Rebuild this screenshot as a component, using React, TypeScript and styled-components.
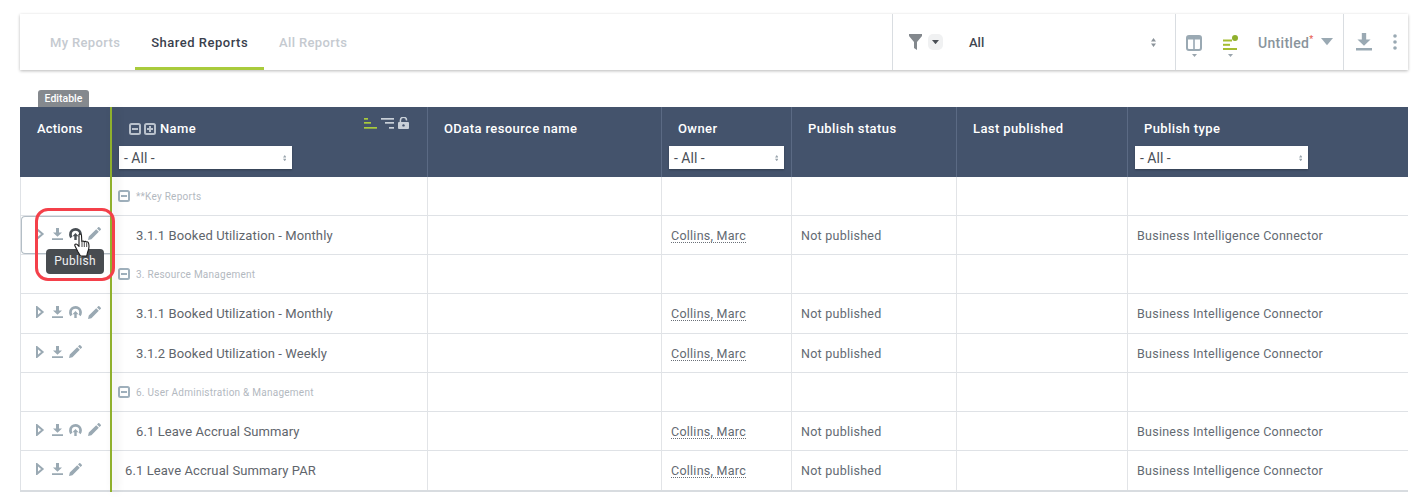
import React from "react";
import styled, { createGlobalStyle } from "styled-components";

const GlobalStyle = createGlobalStyle`
	html, body {
		margin: 0;
		padding: 0;
		background: #fff;
		font-family: Roboto, "Liberation Sans", sans-serif;
	}
`;

const Page = styled.div`
	width: 1428px;
	height: 502px;
	overflow: hidden;
	box-sizing: border-box;
	padding: 14px 20px 0;
`;

const Toolbar = styled.div`
	display: flex;
	height: 56px;
	background: #fff;
	box-shadow: 0 1px 3px rgba(0, 0, 0, 0.28);
	margin-bottom: 20px;
`;

const Tabs = styled.div`
	display: flex;
	flex: 1;
	padding-left: 15px;
`;

const Tab = styled.div<{ $active?: boolean }>`
	display: flex;
	align-items: center;
	box-sizing: border-box;
	height: 56px;
	padding: 3px ${(p) => (p.$active ? 16 : 15)}px 0;
	font-size: 13px;
	font-weight: 500;
	letter-spacing: ${(p) => (p.$active ? 0.5 : 0.35)}px;
	color: ${(p) => (p.$active ? "#3a3f4d" : "#c5cad0")};
	border-bottom: 3px solid ${(p) => (p.$active ? "#a9cb3c" : "transparent")};
`;

const FilterSection = styled.div`
	display: flex;
	align-items: center;
	box-sizing: border-box;
	width: 283px;
	padding: 0 19px 0 16px;
	border-left: 1px solid #d9dde1;
`;

const Chip = styled.div`
	display: flex;
	align-items: center;
	justify-content: center;
	width: 15px;
	height: 16px;
	margin-left: 6px;
	border-radius: 5px;
	background: #f0f1f2;
`;

const FilterValue = styled.div`
	flex: 1;
	margin-left: 26px;
	font-size: 13px;
	font-weight: 500;
	color: #3f4650;
`;

const ViewSection = styled.div`
	display: flex;
	align-items: center;
	box-sizing: border-box;
	width: 168px;
	padding-left: 10px;
	border-left: 1px solid #d9dde1;
`;

const ViewIcon = styled.div<{ $gap: number }>`
	display: flex;
	flex-direction: column;
	align-items: center;
	gap: 3px;
	margin-right: ${(p) => p.$gap}px;
	padding-top: 7px;
`;

const ViewName = styled.div`
	padding-top: 2px;
	font-size: 14px;
	font-weight: 500;
	letter-spacing: 0.3px;
	color: #8a949c;
	margin-right: 7px;
`;

const Star = styled.sup`
	font-size: 9px;
	line-height: 0;
	color: #e8604f;
`;

const ExportSection = styled.div`
	display: flex;
	align-items: center;
	box-sizing: border-box;
	width: 65px;
	padding-left: 12px;
	gap: 21px;
	border-left: 1px solid #d9dde1;
`;

const EditableTag = styled.div`
	width: 51px;
	height: 17px;
	margin-left: 18px;
	border-radius: 3px 3px 0 0;
	background: #85898e;
	color: #fff;
	font-size: 10.5px;
	font-weight: 500;
	line-height: 18px;
	text-align: center;
`;

const TableArea = styled.div`
	position: relative;
	width: 1388px;
`;

const Table = styled.table`
	width: 1388px;
	table-layout: fixed;
	border-collapse: separate;
	border-spacing: 0;
	border-bottom: 2px solid #d8dce0;
`;

const HeadCell = styled.th`
	box-sizing: border-box;
	height: 70px;
	padding: 14px 0 0 16px;
	vertical-align: top;
	text-align: left;
	background: #44536c;
	border-right: 1px solid #5b6a84;
	color: #fff;
	font-size: 13px;
	font-weight: 500;
	letter-spacing: 0.4px;
	line-height: 16px;

	&:first-child {
		padding-left: 17px;
		letter-spacing: 0.2px;
	}
	&:last-child {
		border-right: 0;
	}
`;

const NameHead = styled(HeadCell)`
	position: relative;
	padding-left: 18px;
`;

const NameTitle = styled.div`
	display: flex;
	align-items: center;
	gap: 3px;
`;

const NameLabel = styled.span`
	margin-left: 1px;
`;

const SortTools = styled.div`
	position: absolute;
	top: 10px;
	right: 18px;
	display: flex;
	gap: 4px;
	align-items: center;
`;

const Select = styled.div<{ $width: number; $left: number }>`
	display: flex;
	align-items: center;
	justify-content: space-between;
	box-sizing: border-box;
	width: ${(p) => p.$width}px;
	height: 23px;
	margin: 9px 0 0 ${(p) => p.$left}px;
	padding: 1px 6px 0 5px;
	background: #fff;
	box-shadow: 0 1px 2px rgba(0, 0, 0, 0.25);
	color: #4a4f58;
	font-size: 14px;
	font-weight: 400;
	letter-spacing: 0;
`;

const Cell = styled.td`
	box-sizing: border-box;
	height: 39px;
	padding: 0 0 0 9px;
	border-right: 1px solid #e2e4e7;
	border-bottom: 1px solid #dfe2e6;
	color: #636a72;
	font-size: 12.5px;
	letter-spacing: 0.25px;
	white-space: nowrap;

	&:last-child {
		border-right: 0;
	}
	tr:nth-child(4) > & {
		height: 40px;
	}
	tr:last-child > & {
		border-bottom: 0;
	}
`;

const ActionCell = styled(Cell)`
	padding: 0;
	border-left: 1px solid #dfe2e6;
`;

const ActionBox = styled.div<{ $hover?: boolean }>`
	display: flex;
	align-items: center;
	gap: 6px;
	box-sizing: border-box;
	height: 38px;
	padding: 0 0 3px 14px;
	border: 1px solid ${(p) => (p.$hover ? "#b4bec6" : "transparent")};
	border-right: 0;
	border-radius: 4px 0 0 4px;
`;

const NameCell = styled(Cell)<{ $indent: number }>`
	padding-left: ${(p) => p.$indent}px;
	font-size: 13px;
	letter-spacing: 0.1px;
	color: #5f656c;
`;

const GroupCell = styled(Cell)`
	padding-left: 7px;
`;

const GroupTitle = styled.div`
	display: flex;
	align-items: center;
	gap: 6px;
	font-size: 10px;
	letter-spacing: 0.25px;
	color: #b3b9bf;
`;

const Owner = styled.span`
	border-bottom: 1px dotted #6a7078;
	line-height: 13px;
	display: inline-block;
`;

const FrozenEdge = styled.div`
	position: absolute;
	top: 0;
	bottom: 0;
	left: 90px;
	width: 2px;
	background: #8fb02c;
	box-shadow: 4px 0 8px rgba(0, 0, 0, 0.18);
`;

const Highlight = styled.div`
	position: absolute;
	left: 15px;
	top: 101px;
	width: 80px;
	height: 73px;
	box-sizing: border-box;
	border: 3px solid #f4404a;
	border-radius: 13px;
`;

const Tooltip = styled.div`
	position: absolute;
	left: 26px;
	top: 142px;
	width: 58px;
	height: 25px;
	border-radius: 4px;
	background: #484c50;
	color: #eef0f2;
	font-size: 12px;
	letter-spacing: 0.3px;
	line-height: 25px;
	text-align: center;
`;

const Pointer = styled.div`
	position: absolute;
	left: 54px;
	top: 126px;
	line-height: 0;
`;

const Grey = "#9aa9b3";

const Updown = ({ size = 1, color = "#9aa5ad" }: { size?: number; color?: string }) => (
	<svg width={5 * size} height={9 * size} viewBox='0 0 5 9'>
		<path d='M2.5 0L5 3.5H0zM2.5 9L0 5.5H5z' fill={color} />
	</svg>
);

const Play = () => (
	<svg width='10' height='12' viewBox='0 0 10 12'>
		<path d='M1 1.2L6.6 6L1 10.8z' fill='none' stroke={Grey} strokeWidth='2' />
	</svg>
);

const Download = ({ color = Grey, w = 11 }: { color?: string; w?: number }) => (
	<svg width={w} height={(w * 12) / 11} viewBox='0 0 11 12'>
		<path d='M4 0h3v4.5h3L5.5 8.8 1 4.5h3zM0 10.3h11V12H0z' fill={color} />
	</svg>
);

const Publish = ({ color = Grey }: { color?: string }) => (
	<svg width='13' height='12' viewBox='0 0 13 12'>
		<path
			d='M6.5 0a6.4 6.4 0 0 0-6.400 6.400c0 1.500.5 2.800 1.400 3.900l1.900-1.900a3.700 3.700 0 0 1-.6-2 3.700 3.700 0 0 1 7.400 0c0 .7-.2 1.400-.6 2l1.900 1.900a6.400 6.400 0 0 0-5-10.300z'
			fill={color}
		/>
		<path d='M6.500 5L9.500 8.200H7.700V12H5.300V8.200H3.500z' fill={color} />
	</svg>
);

const Pencil = () => (
	<svg width='13' height='13' viewBox='0 0 13 13'>
		<path d='M0 13l.8-3.400 7.400-7.400 2.600 2.600-7.400 7.400zM9 1.400L10.200.2a.8.8 0 0 1 1.100 0l1.500 1.500a.8.8 0 0 1 0 1.100L11.600 4z' fill={Grey} />
	</svg>
);

const BoxIcon = ({ plus, color, size = 12 }: { plus?: boolean; color: string; size?: number }) => (
	<svg width={size} height={size} viewBox='0 0 12 12'>
		<rect x='1' y='1' width='10' height='10' rx='1.5' fill='none' stroke={color} strokeWidth='2' />
		<rect x='3' y='5' width='6' height='2' fill={color} />
		{plus && <rect x='5' y='3' width='2' height='6' fill={color} />}
	</svg>
);

const Funnel = () => (
	<svg width='13' height='16' viewBox='0 0 13 16'>
		<path d='M0 0h13v2L8 8v8l-3-2V8L0 2z' fill='#83888d' />
	</svg>
);

const SmallCaret = ({ color = "#4a4f55", w = 6 }: { color?: string; w?: number }) => (
	<svg width={w} height={w * 0.6} viewBox='0 0 10 6'>
		<path d='M0 0h10L5 6z' fill={color} />
	</svg>
);

const Columns = () => (
	<svg width='16' height='16' viewBox='0 0 16 16'>
		<rect x='1' y='1' width='14' height='14' rx='2' fill='none' stroke={Grey} strokeWidth='2' />
		<rect x='1' y='1' width='14' height='3.500' fill={Grey} />
		<rect x='7.200' y='2' width='1.600' height='13' fill={Grey} />
	</svg>
);

const GreenList = () => (
	<svg width='16' height='16' viewBox='0 0 16 16'>
		<rect x='1' y='4.500' width='9' height='2' fill='#a5bd32' />
		<rect x='1' y='8.800' width='7' height='2' fill='#a5bd32' />
		<rect x='1' y='13' width='14' height='2' fill='#a5bd32' />
		<circle cx='13' cy='3' r='3' fill='#8fb02c' />
	</svg>
);

const Dots = () => (
	<svg width='4' height='16' viewBox='0 0 4 16'>
		<circle cx='2' cy='2' r='1.800' fill={Grey} />
		<circle cx='2' cy='8' r='1.800' fill={Grey} />
		<circle cx='2' cy='14' r='1.800' fill={Grey} />
	</svg>
);

const SortAsc = () => (
	<svg width='13' height='11' viewBox='0 0 13 11'>
		<rect x='0' y='0' width='4' height='1.700' fill='#a9cb3c' />
		<rect x='0' y='4' width='7' height='1.700' fill='#a9cb3c' />
		<rect x='0' y='9' width='13' height='1.700' fill='#a9cb3c' />
	</svg>
);

const SortDesc = () => (
	<svg width='13' height='11' viewBox='0 0 13 11'>
		<rect x='0' y='0' width='13' height='1.700' fill='#c9d0d8' />
		<rect x='4' y='4' width='9' height='1.700' fill='#c9d0d8' />
		<rect x='8' y='9' width='5' height='1.700' fill='#c9d0d8' />
	</svg>
);

const Lock = () => (
	<svg width='11' height='12' viewBox='0 0 11 12'>
		<path d='M2.400 5V3.400a3.100 3.100 0 0 1 6.200 0' fill='none' stroke='#c9d0d8' strokeWidth='1.500' />
		<path d='M1 5h9a1 1 0 0 1 1 1v5a1 1 0 0 1-1 1H1a1 1 0 0 1-1-1V6a1 1 0 0 1 1-1z' fill='#c9d0d8' />
		<circle cx='5.500' cy='8.400' r='1.200' fill='#44536c' />
	</svg>
);

const Hand = () => (
	<svg width='19' height='24' viewBox='0 0 19 24'>
		<path
			d='M5 1.500c1-.9 2.400-.3 2.500 1l.3 6c.7-.7 1.800-.6 2.300.2.7-.6 1.800-.4 2.200.4.8-.5 2-.2 2.200.8.7 2.600.6 6.500-1 9.600l-.8 3.500H6.500L3.800 18.500 1 13c-.7-1.400.8-2.600 2-1.600l2 2z'
			fill='#fff'
			stroke='#1c1c1c'
			strokeWidth='1.100'
			strokeLinejoin='round'
		/>
		<path d='M8 9v5M10.300 9v5M12.700 10v4' stroke='#1c1c1c' strokeWidth='.8' />
	</svg>
);

type Report = { kind: "report"; name: string; indent: number; publish: boolean; hover?: boolean };
type Group = { kind: "group"; name: string };

const ROWS: (Report | Group)[] = [
	{ kind: "group", name: "**Key Reports" },
	{ kind: "report", name: "3.1.1 Booked Utilization - Monthly", indent: 25, publish: true, hover: true },
	{ kind: "group", name: "3. Resource Management" },
	{ kind: "report", name: "3.1.1 Booked Utilization - Monthly", indent: 25, publish: true },
	{ kind: "report", name: "3.1.2 Booked Utilization - Weekly", indent: 25, publish: false },
	{ kind: "group", name: "6. User Administration & Management" },
	{ kind: "report", name: "6.1 Leave Accrual Summary", indent: 25, publish: true },
	{ kind: "report", name: "6.1 Leave Accrual Summary PAR", indent: 14, publish: false },
];

const COLUMNS = [91, 317, 234, 130, 165, 171, 280];

export default function App() {
	return (
		<Page>
			<GlobalStyle />
			<Toolbar>
				<Tabs>
					<Tab>My Reports</Tab>
					<Tab $active>Shared Reports</Tab>
					<Tab>All Reports</Tab>
				</Tabs>
				<FilterSection>
					<Funnel />
					<Chip>
						<SmallCaret w={7} />
					</Chip>
					<FilterValue>All</FilterValue>
					<Updown size={1} color='#8b939a' />
				</FilterSection>
				<ViewSection>
					<ViewIcon $gap={20}>
						<Columns />
						<SmallCaret color='#9aa5ad' w={5} />
					</ViewIcon>
					<ViewIcon $gap={20}>
						<GreenList />
						<SmallCaret color='#9aa5ad' w={5} />
					</ViewIcon>
					<ViewName>
						Untitled<Star>*</Star>
					</ViewName>
					<SmallCaret color={Grey} w={12} />
				</ViewSection>
				<ExportSection>
					<Download w={16} />
					<Dots />
				</ExportSection>
			</Toolbar>
			<EditableTag>Editable</EditableTag>
			<TableArea>
				<Table>
					<colgroup>
						{COLUMNS.map((w, i) => (
							<col key={i} width={w} />
						))}
					</colgroup>
					<thead>
						<tr>
							<HeadCell>Actions</HeadCell>
							<NameHead>
								<NameTitle>
									<BoxIcon color='#b9c1cc' />
									<BoxIcon color='#b9c1cc' plus />
									<NameLabel>Name</NameLabel>
								</NameTitle>
								<SortTools>
									<SortAsc />
									<SortDesc />
									<Lock />
								</SortTools>
								<Select $width={173} $left={-10}>
									- All -
									<Updown size={0.7} />
								</Select>
							</NameHead>
							<HeadCell>OData resource name</HeadCell>
							<HeadCell>
								Owner
								<Select $width={115} $left={-9}>
									- All -
									<Updown size={0.7} />
								</Select>
							</HeadCell>
							<HeadCell>Publish status</HeadCell>
							<HeadCell>Last published</HeadCell>
							<HeadCell>
								Publish type
								<Select $width={173} $left={-9}>
									- All -
									<Updown size={0.7} />
								</Select>
							</HeadCell>
						</tr>
					</thead>
					<tbody>
						{ROWS.map((row, i) =>
							row.kind === "group" ? (
								<tr key={i}>
									<ActionCell />
									<GroupCell>
										<GroupTitle>
											<BoxIcon color='#9fb0bc' />
											{row.name}
										</GroupTitle>
									</GroupCell>
									<Cell />
									<Cell />
									<Cell />
									<Cell />
									<Cell />
								</tr>
							) : (
								<tr key={i}>
									<ActionCell>
										<ActionBox $hover={row.hover}>
											<Play />
											<Download />
											{row.publish && <Publish color={row.hover ? "#484e54" : Grey} />}
											<Pencil />
										</ActionBox>
									</ActionCell>
									<NameCell $indent={row.indent}>{row.name}</NameCell>
									<Cell />
									<Cell>
										<Owner>Collins, Marc</Owner>
									</Cell>
									<Cell>Not published</Cell>
									<Cell />
									<Cell>Business Intelligence Connector</Cell>
								</tr>
							)
						)}
					</tbody>
				</Table>
				<FrozenEdge />
				<Highlight />
				<Tooltip>Publish</Tooltip>
				<Pointer>
					<Hand />
				</Pointer>
			</TableArea>
		</Page>
	);
}
